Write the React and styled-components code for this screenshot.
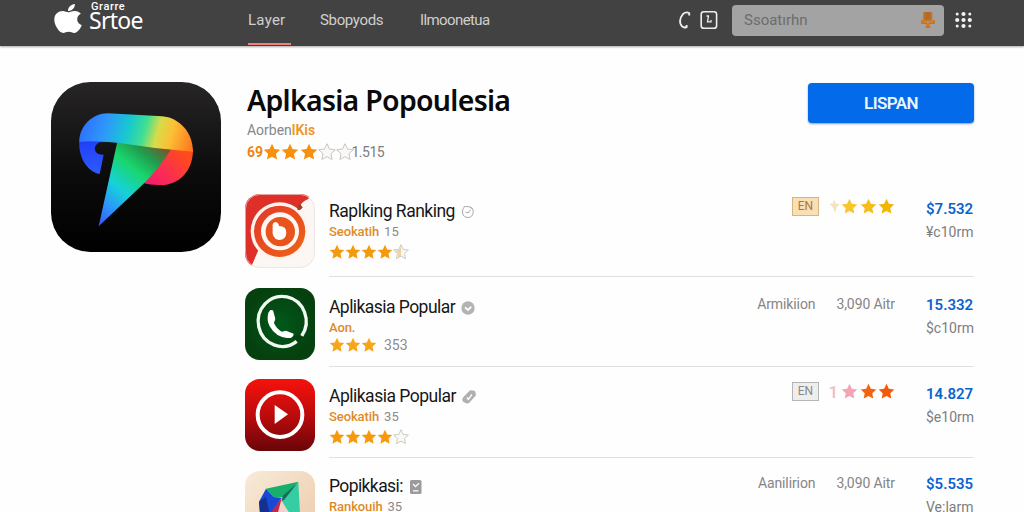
import React from 'react';
import styled, { createGlobalStyle } from 'styled-components';
import { FaApple } from 'react-icons/fa';

const NAV_ITEMS = [
  { label: 'Layer', width: 43, gap: 29, spacing: 0.25, active: true },
  { label: 'Sbopyods', width: 63, gap: 37, spacing: -0.35 },
  { label: 'Ilmoonetua', width: 70, gap: 0, spacing: -0.6 },
];

const APPS = [
  {
    id: 'ranking',
    name: 'Raplking Ranking',
    nameSpacing: -0.5,
    mark: 'clock',
    label: 'Seokatih',
    count: '15',
    stars: ['#f59a0c', '#f59a0c', '#f59a0c', '#f59a0c', 'half'],
    badge: { text: 'EN', tone: 'gold' },
    score: ['faded', '#f7c62f', '#f6bd16', '#f3b500'],
    price: '$7.532',
    period: '¥c10rm',
    height: 91,
    top: 15,
    iconTop: 8,
    iconHeight: 74,
  },
  {
    id: 'phone',
    name: 'Aplikasia Popular',
    nameSpacing: -0.55,
    mark: 'check',
    label: 'Aon.',
    stars: ['#f8a51b', '#f8a51b', '#f8a51b'],
    votes: '353',
    meta: ['Armikiion', '3,090 Aitr'],
    price: '15.332',
    period: '$c10rm',
    height: 90,
    top: 20,
    iconTop: 11,
    iconHeight: 72,
    tight: true,
  },
  {
    id: 'video',
    name: 'Aplikasia Popular',
    nameSpacing: -0.5,
    mark: 'tag',
    label: 'Seokatih',
    count: '35',
    stars: ['#f59a0c', '#f59a0c', '#f59a0c', '#f59a0c', 'empty'],
    badge: { text: 'EN', tone: 'grey' },
    score: ['one', '#f3a5b4', '#f26311', '#f05a0a'],
    price: '14.827',
    period: '$e10rm',
    height: 91,
    top: 19,
    iconTop: 12,
    iconHeight: 72,
  },
  {
    id: 'kite',
    name: 'Popikkasi:',
    nameSpacing: -0.6,
    mark: 'box',
    label: 'Rankouih',
    count: '35',
    stars: [],
    meta: ['Aanilirion', '3,090 Aitr'],
    price: '$5.535',
    period: 'Ve:larm',
    height: 91,
    top: 18,
    iconTop: 13,
    iconHeight: 72,
  },
];

const STAR_PATH =
  'M12 1l3.3 7.1 7.7.9-5.7 5.3 1.5 7.7L12 18.2 5.2 22l1.5-7.7L1 9l7.7-.9z';

const Star = ({ fill, size }) => {
  const outlined = fill === 'empty' || fill === 'half';

  return (
    <StarSvg $size={size} viewBox="0 0 24 24">
      <path
        d={STAR_PATH}
        fill={outlined ? '#faf8f5' : fill}
        stroke={outlined ? '#c6c2bd' : 'none'}
        strokeWidth="1.3"
      />
      {fill === 'half' && (
        <path d="M12 3v15l-5 3 1-7-5-4 6-1z" fill="#eed2a6" />
      )}
    </StarSvg>
  );
};

const FadedStar = () => (
  <svg width="11" height="17" viewBox="0 0 11 17">
    <path d="M5 1L6.5 5.500 10.500 6 7.500 9.500 6 15 4 9.500.5 6 4 5.500Z" fill="#f3e3c0" />
  </svg>
);

const FeaturedIcon = () => (
  <FeaturedSvg viewBox="35 37 510 510">
    <defs>
      <linearGradient id="tile" x1="0" y1="0" x2="0" y2="1">
        <stop offset="0" stopColor="#272525" />
        <stop offset="0.55" stopColor="#0b0b0b" />
        <stop offset="1" stopColor="#000" />
      </linearGradient>
      <linearGradient
        id="ribbon"
        gradientUnits="userSpaceOnUse"
        x1="125"
        y1="155"
        x2="450"
        y2="250"
      >
        <stop offset="0" stopColor="#2f6dff" />
        <stop offset="0.22" stopColor="#2e97fb" />
        <stop offset="0.42" stopColor="#17c9cf" />
        <stop offset="0.56" stopColor="#3fdf93" />
        <stop offset="0.68" stopColor="#d8dc49" />
        <stop offset="0.8" stopColor="#fbc034" />
        <stop offset="1" stopColor="#ff7a20" />
      </linearGradient>
      <linearGradient
        id="wedge"
        gradientUnits="userSpaceOnUse"
        x1="180"
        y1="468"
        x2="370"
        y2="235"
      >
        <stop offset="0" stopColor="#3558f5" />
        <stop offset="0.2" stopColor="#2e93fb" />
        <stop offset="0.42" stopColor="#16d2d8" />
        <stop offset="0.66" stopColor="#19d66e" />
        <stop offset="0.85" stopColor="#219a4c" />
        <stop offset="1" stopColor="#6f5b33" />
      </linearGradient>
      <linearGradient
        id="bowl"
        gradientUnits="userSpaceOnUse"
        x1="330"
        y1="340"
        x2="425"
        y2="245"
      >
        <stop offset="0" stopColor="#f41c6b" />
        <stop offset="0.45" stopColor="#fb2f50" />
        <stop offset="1" stopColor="#ff4a1e" />
      </linearGradient>
      <linearGradient id="tail" x1="0" y1="0" x2="0" y2="1">
        <stop offset="0" stopColor="#1f3df5" />
        <stop offset="1" stopColor="#2f5bff" />
      </linearGradient>
    </defs>
    <rect x="35" y="37" width="510" height="510" rx="118" fill="url(#tile)" />
    <path
      d="M120 210C116 262 143 305 181 313L193 255C160 257 160 225 182 218L235 216V205Z"
      fill="url(#tail)"
    />
    <path
      d="M461 240C461 303 420 346 365 346Q335 347 310 340L385 232Z"
      fill="url(#bowl)"
    />
    <path d="M234 216L178 470 312 343Q358 298 396 238Z" fill="url(#wedge)" />
    <path
      d="M120 216C120 170 158 131 206 131L368 140C420 144 461 188 461 246Q350 238 240 220 180 213 120 216Z"
      fill="url(#ribbon)"
    />
  </FeaturedSvg>
);

const RankingIcon = () => (
  <TileSvg $height={74} viewBox="27 24 210 222">
    <defs>
      <linearGradient id="rank" x1="0" y1="0" x2="1" y2="1">
        <stop offset="0" stopColor="#e3382c" />
        <stop offset="1" stopColor="#ef6414" />
      </linearGradient>
      <clipPath id="rankClip">
        <rect x="27" y="24" width="210" height="222" rx="44" />
      </clipPath>
    </defs>
    <g clipPath="url(#rankClip)">
      <rect x="27" y="24" width="210" height="222" fill="#fbf7f5" />
      <path d="M27 24H225L205 60 66 195 44 246H27Z" fill="#de3029" />
      <circle cx="131" cy="136" r="87" fill="#fdf4ee" />
      <circle cx="131" cy="136" r="77" fill="url(#rank)" />
      <circle cx="132" cy="136" r="57" fill="#fdf6f1" />
      <circle cx="133" cy="137" r="44" fill="#e8541b" />
      <path
        d="M110 124Q108 109 119 108 128 110 129 120 152 120 151 142 149 163 128 162 106 160 110 124Z"
        fill="#fff"
      />
      <path d="M188 52L197 58Q197 72 184 72Z" fill="#a73a23" />
      <path d="M194 56Q205 42 218 40L237 60V110Z" fill="#fbf7f5" />
    </g>
    <rect
      x="28.5"
      y="25.5"
      width="207"
      height="219"
      rx="43"
      fill="none"
      stroke="#e8dcda"
      strokeWidth="2"
    />
  </TileSvg>
);

const PhoneIcon = () => (
  <TileSvg $height={72} viewBox="27 24 210 216">
    <defs>
      <radialGradient id="green">
        <stop offset="0" stopColor="#00591a" />
        <stop offset="1" stopColor="#06400f" />
      </radialGradient>
    </defs>
    <rect x="27" y="24" width="210" height="216" rx="44" fill="url(#green)" />
    <path
      d="M182 184A72 75 0 1 1 197 168"
      fill="none"
      stroke="#f1fbf1"
      strokeWidth="10"
    />
    <path
      d="M103 90L111 91 118 116 114 129Q122 147 137 155L150 152 173 161Q172 176 153 174 119 171 101 139 91 119 97 98Z"
      fill="#fff"
    />
    <path d="M170 171L189 164 204 172 188 182Z" fill="#06400f" />
  </TileSvg>
);

const VideoIcon = () => (
  <TileSvg $height={72} viewBox="26 27 210 216">
    <defs>
      <linearGradient id="red" x1="0" y1="0" x2="0" y2="1">
        <stop offset="0" stopColor="#f5120c" />
        <stop offset="0.5" stopColor="#bd0b0c" />
        <stop offset="1" stopColor="#690508" />
      </linearGradient>
    </defs>
    <rect x="26" y="27" width="210" height="216" rx="44" fill="url(#red)" />
    <circle
      cx="131"
      cy="134"
      r="67"
      fill="none"
      stroke="#fff"
      strokeWidth="12"
    />
    <path d="M115 105L155 133 115 162Z" fill="#fff" />
  </TileSvg>
);

const KiteIcon = () => (
  <TileSvg $height={72} viewBox="27 33 210 216">
    <defs>
      <linearGradient id="sand" x1="0" y1="0" x2="1" y2="1">
        <stop offset="0" stopColor="#f7ebd8" />
        <stop offset="1" stopColor="#edc9ab" />
      </linearGradient>
    </defs>
    <rect x="27" y="33" width="210" height="216" rx="44" fill="url(#sand)" />
    <path d="M90 86L187 65 140 112 113 111Z" fill="#16b06c" />
    <path d="M90 86L113 111 136 113 108 160H72L69 125Z" fill="#1549d6" />
    <path d="M69 125L90 110 100 160H72Z" fill="#16308f" />
    <path d="M138 112L125 160H102Z" fill="#c02752" />
    <path d="M187 66L192 160H158L137 122Z" fill="#37cda3" />
    <path d="M187 66L146 118 137 124 140 108Z" fill="#176d5d" />
    <path d="M137 124L161 160H128Z" fill="#f2d3c8" />
  </TileSvg>
);

const TILES = {
  ranking: RankingIcon,
  phone: PhoneIcon,
  video: VideoIcon,
  kite: KiteIcon,
};

const Mark = ({ kind }) => (
  <MarkSvg viewBox="0 0 14 14">
    {kind === 'clock' && (
      <g fill="none" stroke="#a9a9a9" strokeWidth="1">
        <path d="M3 2.5Q1.2 4 1.5 8 2.5 12.5 7 12.5T12.2 7.5Q12.7 2 7 1.6T3 2.5" />
        <path d="M4.5 7L7 8 9.5 4.8M9 2.5l2.5 1" />
      </g>
    )}
    {kind === 'check' && (
      <>
        <circle cx="7" cy="7" r="6.7" fill="#b3b3b3" />
        <path
          d="M4 6.3l3 2.7 3.3-3.3"
          fill="none"
          stroke="#fff"
          strokeWidth="1.8"
        />
      </>
    )}
    {kind === 'tag' && (
      <>
        <path
          d="M1 7.5L7 1.3Q8 0 10 .3L13 1q1 2 .8 4.5L7.5 12.6Q6 14 4 13.2L.8 11.5Q-.2 9 1 7.5Z"
          fill="#b0b0b0"
        />
        <path
          d="M5 7.5l1.3 1.8L10 4.5"
          fill="none"
          stroke="#fff"
          strokeWidth="1.3"
        />
      </>
    )}
    {kind === 'box' && (
      <>
        <rect x="1" y="0" width="11.5" height="14" rx="1.5" fill="#9b9b9b" />
        <path
          d="M4 4l2.5 2.6L10 3.3M4 10.8h5.5"
          fill="none"
          stroke="#fff"
          strokeWidth="1.3"
        />
      </>
    )}
  </MarkSvg>
);

const Header = () => (
  <Bar>
    <Brand>
      <AppleLogo preserveAspectRatio="none" />
      <Wordmark>
        <WordmarkTop>Grarre</WordmarkTop>
        <WordmarkMain>Srtoe</WordmarkMain>
      </Wordmark>
    </Brand>

    <Nav>
      {NAV_ITEMS.map(({ label, width, gap, spacing, active }) => (
        <NavItem
          key={label}
          $width={width}
          $gap={gap}
          $spacing={spacing}
          $active={active}
        >
          {label}
        </NavItem>
      ))}
    </Nav>

    <Tools>
      <svg width="13" height="20" viewBox="0 0 13 20">
        <path
          d="M11.200 5.600V3.200Q8.500 1.200 5 4 .8 9 2.600 14 4.400 18.600 8.600 17V15"
          fill="none"
          stroke="#eee"
          strokeWidth="1.900"
        />
      </svg>
      <svg width="18" height="20" viewBox="0 0 18 20">
        <rect
          x="1.2"
          y="1.7"
          width="15.4"
          height="16.6"
          rx="2.6"
          fill="none"
          stroke="#eee"
          strokeWidth="1.6"
        />
        <path
          d="M6.500 6H9M8.500 6L7.500 11.800H11V10"
          fill="none"
          stroke="#eee"
          strokeWidth="1.3"
        />
      </svg>
      <Search>
        <span>Ssoatırhn</span>
        <svg width="14" height="18" viewBox="0 0 14 18">
          <rect x="3" y="1" width="7.5" height="8" rx="1" fill="#b06a2c" />
          <path
            d="M3 1.5v8h7.5v-8M1 9v3h4l2 2 2-2h4V9M7 12v5M4.5 15.5l2.5 1 2.5-1"
            fill="none"
            stroke="#cb7422"
            strokeWidth="1.8"
          />
        </svg>
      </Search>
      <svg width="17" height="18" viewBox="0 0 17 18" fill="#f2f2f2">
        {[2.2, 8.5, 14.8].map((x) =>
          [3, 9, 15].map((y) => (
            <circle
              key={`${x}-${y}`}
              cx={x}
              cy={y}
              r={x === 8.5 || y === 9 ? 2.1 : 1.5}
            />
          )),
        )}
      </svg>
    </Tools>
  </Bar>
);

const AppRow = ({ app }) => {
  const Tile = TILES[app.id];

  return (
    <Row $height={app.height}>
      <TileSlot $top={app.iconTop}>
        <Tile />
      </TileSlot>

      <RowBody $top={app.top}>
        <Info>
          <NameLine>
            <Name $spacing={app.nameSpacing}>{app.name}</Name>
            <Mark kind={app.mark} />
          </NameLine>
          <LabelLine $tight={app.tight}>
            <Label>{app.label}</Label>
            {app.count && <Count>{app.count}</Count>}
          </LabelLine>
          <StarLine $tight={app.tight}>
            {app.stars.map((fill, index) => (
              <Star key={index} fill={fill} size={16} />
            ))}
            {app.votes && <Votes>{app.votes}</Votes>}
          </StarLine>
        </Info>

        {app.badge && (
          <Score>
            <Badge $tone={app.badge.tone}>{app.badge.text}</Badge>
            {app.score.map((fill, index) => {
              if (fill === 'one') return <ScoreOne key={index}>1</ScoreOne>;
              if (fill === 'faded') return <FadedStar key={index} />;
              return <Star key={index} fill={fill} size={17} />;
            })}
          </Score>
        )}

        {app.meta && (
          <Meta>
            {app.meta.map((text) => (
              <span key={text}>{text}</span>
            ))}
          </Meta>
        )}

        <PriceBlock>
          <Price>{app.price}</Price>
          <Period>{app.period}</Period>
        </PriceBlock>
      </RowBody>
    </Row>
  );
};

const App = () => (
  <Page>
    <GlobalStyle />
    <Header />

    <Main>
      <FeaturedIcon />

      <Content>
        <Hero>
          <div>
            <Title>Aplkasia Popoulesia</Title>
            <Author>
              Aorben<b>lKis</b>
            </Author>
            <Rating>
              <strong>69</strong>
              {['#f8900c', '#f8900c', '#f8900c', 'empty', 'empty'].map(
                (fill, index) => (
                  <Star key={index} fill={fill} size={18} />
                ),
              )}
              <span>1.515</span>
            </Rating>
          </div>
          <BuyButton type="button">LISPAN</BuyButton>
        </Hero>

        {APPS.map((app) => (
          <AppRow app={app} key={app.id} />
        ))}
      </Content>
    </Main>
  </Page>
);

const GlobalStyle = createGlobalStyle`
  * {
    box-sizing: border-box;
  }

  body {
    margin: 0;
    overflow: hidden;
  }
`;

const Page = styled.div`
  width: 1024px;
  height: 512px;
  overflow: hidden;
  background-color: #fefefe;
  font-family: Roboto, 'Noto Sans', sans-serif;
`;

const Bar = styled.header`
  display: flex;
  height: 46px;
  padding-left: 54px;
  background-color: #424243;
  box-shadow: 0 1px 2px rgba(0, 0, 0, 0.35);
`;

const Brand = styled.div`
  display: flex;
  width: 194px;
  color: #fff;
`;

const AppleLogo = styled(FaApple)`
  width: 28px;
  height: 33px;
  margin: 2px 7px 0 0;
`;

const Wordmark = styled.div`
  padding-top: 1px;
`;

const WordmarkTop = styled.div`
  height: 10px;
  padding-left: 2px;
  font-size: 11px;
  line-height: 12px;
  font-weight: 500;
  letter-spacing: 0.6px;
`;

const WordmarkMain = styled.div`
  font-family: 'Noto Sans', sans-serif;
  font-size: 23px;
  line-height: 18px;
  letter-spacing: -0.7px;
`;

const Nav = styled.nav`
  display: flex;
`;

const NavItem = styled.a`
  width: ${({ $width }) => $width}px;
  height: 45px;
  margin-right: ${({ $gap }) => $gap}px;
  border-bottom: 2px solid ${({ $active }) => ($active ? '#ee8077' : 'transparent')};
  color: #cfcfcf;
  font-size: 15px;
  line-height: 41px;
  white-space: nowrap;
  letter-spacing: ${({ $spacing }) => $spacing}px;
`;

const Tools = styled.div`
  display: flex;
  align-items: center;
  height: 40px;
  margin: 0 52px 0 auto;

  > svg:nth-child(2) {
    margin: 0 14px 0 9px;
  }
`;

const Search = styled.div`
  display: flex;
  align-items: center;
  justify-content: space-between;
  width: 212px;
  height: 31px;
  margin-right: 11px;
  padding: 0 9px 0 12px;
  border-radius: 4px;
  background-color: #a3a3a3;
  color: #6c6c6c;
  font-size: 15px;
`;

const Main = styled.main`
  display: flex;
  align-items: flex-start;
  padding-left: 51px;
`;

const FeaturedSvg = styled.svg`
  flex: none;
  width: 170px;
  height: 170px;
  margin: 36px 24px 0 0;
`;

const Content = styled.div`
  width: 729px;
`;

const Hero = styled.section`
  display: flex;
  justify-content: space-between;
  height: 140px;
  padding: 37px 0 0 2px;
`;

const Title = styled.h1`
  margin: -1px 0 1px;
  font-family: 'Noto Sans', sans-serif;
  font-size: 28.5px;
  font-weight: 600;
  line-height: 36px;
  letter-spacing: -0.72px;
  color: #0a0a0a;
  white-space: nowrap;
`;

const Author = styled.div`
  height: 21px;
  color: #85868c;
  font-size: 14px;
  line-height: 23px;

  b {
    color: #ee9420;
    font-weight: 600;
  }
`;

const Rating = styled.div`
  display: flex;
  align-items: center;
  height: 23px;
  color: #7d7d7d;
  font-size: 14px;

  strong {
    width: 16px;
    color: #ee8414;
  }

  svg {
    margin-right: 0.3px;
  }

  span {
    margin-left: -3px;
    letter-spacing: -0.5px;
  }
`;

const BuyButton = styled.button`
  width: 166px;
  height: 40px;
  padding: 0;
  border: none;
  border-radius: 4px;
  background-color: #036ae9;
  box-shadow: 0 1px 2px rgba(0, 60, 160, 0.5);
  color: #e9f6ff;
  font-family: Roboto, sans-serif;
  font-size: 17px;
  font-weight: 600;
  letter-spacing: -0.6px;
`;

const Row = styled.article`
  display: flex;
  height: ${({ $height }) => $height}px;
`;

const TileSlot = styled.div`
  width: 84px;
  padding-top: ${({ $top }) => $top}px;
`;

const TileSvg = styled.svg`
  display: block;
  width: 70px;
  height: ${({ $height }) => $height}px;
`;

const RowBody = styled.div`
  display: flex;
  flex: 1;
  padding-top: ${({ $top }) => $top}px;
  border-bottom: 1px solid #e0e0e2;
`;

const Info = styled.div`
  margin-right: auto;
`;

const NameLine = styled.div`
  display: flex;
  align-items: center;
  gap: 6px;
  height: 21px;
`;

const Name = styled.h2`
  margin: 0;
  color: #161616;
  font-size: 17.5px;
  font-weight: 400;
  line-height: 21px;
  letter-spacing: ${({ $spacing }) => $spacing}px;
  white-space: nowrap;
`;

const MarkSvg = styled.svg`
  width: 14px;
  height: 14px;
`;

const LabelLine = styled.div`
  display: flex;
  gap: 5px;
  height: ${({ $tight }) => ($tight ? 18 : 20)}px;
  font-size: 14px;
  line-height: 20px;
`;

const Label = styled.span`
  color: #dd8b28;
  font-size: 13px;
  font-weight: 500;
  letter-spacing: -0.1px;
`;

const Count = styled.span`
  color: #8a8a8a;
  font-size: 13px;
`;

const StarLine = styled.div`
  display: flex;
  align-items: center;
  height: ${({ $tight }) => ($tight ? 17 : 20)}px;
`;

const StarSvg = styled.svg`
  flex: none;
  width: ${({ $size }) => $size}px;
  height: ${({ $size }) => $size}px;
`;

const Votes = styled.span`
  margin-left: 7px;
  color: #8c8c8c;
  font-size: 14px;
`;

const Score = styled.div`
  display: flex;
  align-items: center;
  gap: 1.5px;
  height: 19px;
  margin: -4px 31px 0 0;
`;

const Badge = styled.span`
  width: 27px;
  height: 19px;
  margin-right: 8px;
  border: 1px solid ${({ $tone }) => ($tone === 'gold' ? '#d8b483' : '#b5b5b5')};
  background-color: ${({ $tone }) => ($tone === 'gold' ? '#fadfb4' : '#eeeeee')};
  color: ${({ $tone }) => ($tone === 'gold' ? '#a87843' : '#8c8888')};
  font-size: 12px;
  line-height: 17px;
  text-align: center;
`;

const ScoreOne = styled.span`
  width: 11px;
  color: #eebbc2;
  font-size: 17px;
  font-weight: 500;
`;

const Meta = styled.div`
  display: flex;
  gap: 21px;
  margin: -3px 31px 0 0;
  height: 20px;
  color: #858585;
  font-size: 14px;
  line-height: 20px;
  letter-spacing: -0.1px;
`;

const PriceBlock = styled.div`
  width: 48px;
  margin-top: -3px;
  white-space: nowrap;
`;

const Price = styled.div`
  color: #0b63cf;
  font-size: 15px;
  font-weight: 600;
  line-height: 22px;
`;

const Period = styled.div`
  color: #7d7d7d;
  font-size: 14px;
  line-height: 25px;
`;

export default App;
